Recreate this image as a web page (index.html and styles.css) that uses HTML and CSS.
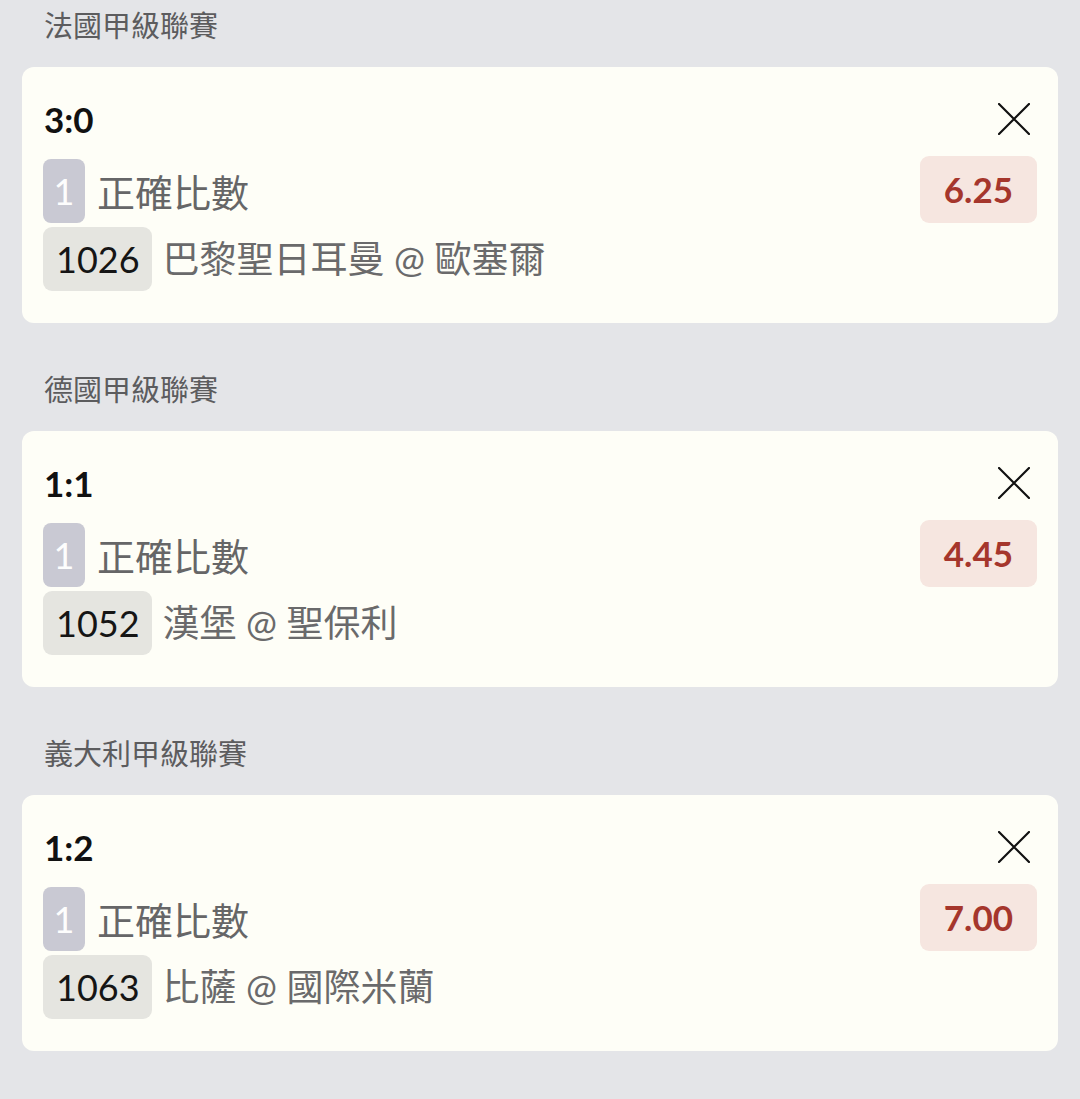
FILE: index.html
```html
<!DOCTYPE html>
<html lang="zh-Hant">
<head>
<meta charset="utf-8">
<title>投注單</title>
<link rel="stylesheet" href="styles.css">
</head>
<body>
<main class="slip">
  <section class="league">
    <h2 class="league-name">法國甲級聯賽</h2>
    <div class="card">
      <div class="row row-top">
        <span class="score">3:0</span>
        <button class="close" aria-label="移除">
          <svg viewBox="0 0 32 32" width="32" height="32"><path d="M1 1 L31 31 M31 1 L1 31" stroke="#111" stroke-width="2.2" fill="none" stroke-linecap="round"/></svg>
        </button>
      </div>
      <div class="row row-market">
        <div class="market">
          <span class="leg">1</span>
          <span class="market-name">正確比數</span>
        </div>
        <span class="odds">6.25</span>
      </div>
      <div class="row row-match">
        <span class="match-no">1026</span>
        <span class="teams">巴黎聖日耳曼 @ 歐塞爾</span>
      </div>
    </div>
  </section>

  <section class="league">
    <h2 class="league-name">德國甲級聯賽</h2>
    <div class="card">
      <div class="row row-top">
        <span class="score">1:1</span>
        <button class="close" aria-label="移除">
          <svg viewBox="0 0 32 32" width="32" height="32"><path d="M1 1 L31 31 M31 1 L1 31" stroke="#111" stroke-width="2.2" fill="none" stroke-linecap="round"/></svg>
        </button>
      </div>
      <div class="row row-market">
        <div class="market">
          <span class="leg">1</span>
          <span class="market-name">正確比數</span>
        </div>
        <span class="odds">4.45</span>
      </div>
      <div class="row row-match">
        <span class="match-no">1052</span>
        <span class="teams">漢堡 @ 聖保利</span>
      </div>
    </div>
  </section>

  <section class="league">
    <h2 class="league-name">義大利甲級聯賽</h2>
    <div class="card">
      <div class="row row-top">
        <span class="score">1:2</span>
        <button class="close" aria-label="移除">
          <svg viewBox="0 0 32 32" width="32" height="32"><path d="M1 1 L31 31 M31 1 L1 31" stroke="#111" stroke-width="2.2" fill="none" stroke-linecap="round"/></svg>
        </button>
      </div>
      <div class="row row-market">
        <div class="market">
          <span class="leg">1</span>
          <span class="market-name">正確比數</span>
        </div>
        <span class="odds">7.00</span>
      </div>
      <div class="row row-match">
        <span class="match-no">1063</span>
        <span class="teams">比薩 @ 國際米蘭</span>
      </div>
    </div>
  </section>
</main>
</body>
</html>
```

FILE: styles.css
```css
* { box-sizing: border-box; }

html, body {
  margin: 0;
  padding: 0;
}

body {
  background: #e4e5e8;
  font-family: Lato, "Noto Sans CJK TC", "Noto Sans", sans-serif;
  color: #111;
}

.slip {
  display: flex;
  flex-direction: column;
  gap: 41px;
  padding: 0 22px;
}

.league-name {
  margin: 4px 0 23px 22px;
  height: 40px;
  line-height: 40px;
  font-size: 29px;
  font-weight: 400;
  color: #5c5c5e;
  font-family: "Noto Sans CJK TC", sans-serif;
}

.card {
  background: #fefef7;
  border-radius: 12px;
  padding: 30px 21px 32px 21px;
  display: flex;
  flex-direction: column;
}

.row {
  display: flex;
  align-items: center;
}

.row-top {
  height: 44px;
  justify-content: space-between;
}

.score {
  font-family: Lato, sans-serif;
  font-weight: 700;
  font-size: 35px;
  line-height: 44px;
  padding-left: 1px;
}

.close {
  border: 0;
  background: none;
  padding: 0;
  margin: 0 7px 0 0;
  width: 32px;
  height: 32px;
  display: flex;
}

.row-market {
  margin-top: 15px;
  height: 67px;
  justify-content: space-between;
}

.market {
  display: flex;
  align-items: center;
  gap: 12px;
  height: 67px;
  padding-top: 3px;
}

.leg {
  width: 42px;
  height: 64px;
  border-radius: 8px;
  background: #c9c9d3;
  color: #fdfdfd;
  font-family: Lato, sans-serif;
  font-size: 36px;
  line-height: 64px;
  text-align: center;
}

.market-name {
  font-family: "Noto Sans CJK TC", sans-serif;
  font-size: 38px;
  color: #666667;
  line-height: 64px;
}

.odds {
  height: 67px;
  padding: 0 24px;
  border-radius: 9px;
  background: #f6e6e0;
  color: #a5362c;
  font-family: Lato, sans-serif;
  font-weight: 700;
  font-size: 35px;
  line-height: 67px;
}

.row-match {
  margin-top: 4px;
  height: 64px;
  gap: 11px;
}

.match-no {
  height: 64px;
  padding: 0 12px 0 13px;
  border-radius: 9px;
  background: #e5e5e0;
  color: #151515;
  font-family: Lato, sans-serif;
  font-size: 36px;
  line-height: 64px;
}

.teams {
  font-family: Lato, "Noto Sans CJK TC", sans-serif;
  font-size: 37px;
  color: #6a6a6b;
  line-height: 64px;
}
```
